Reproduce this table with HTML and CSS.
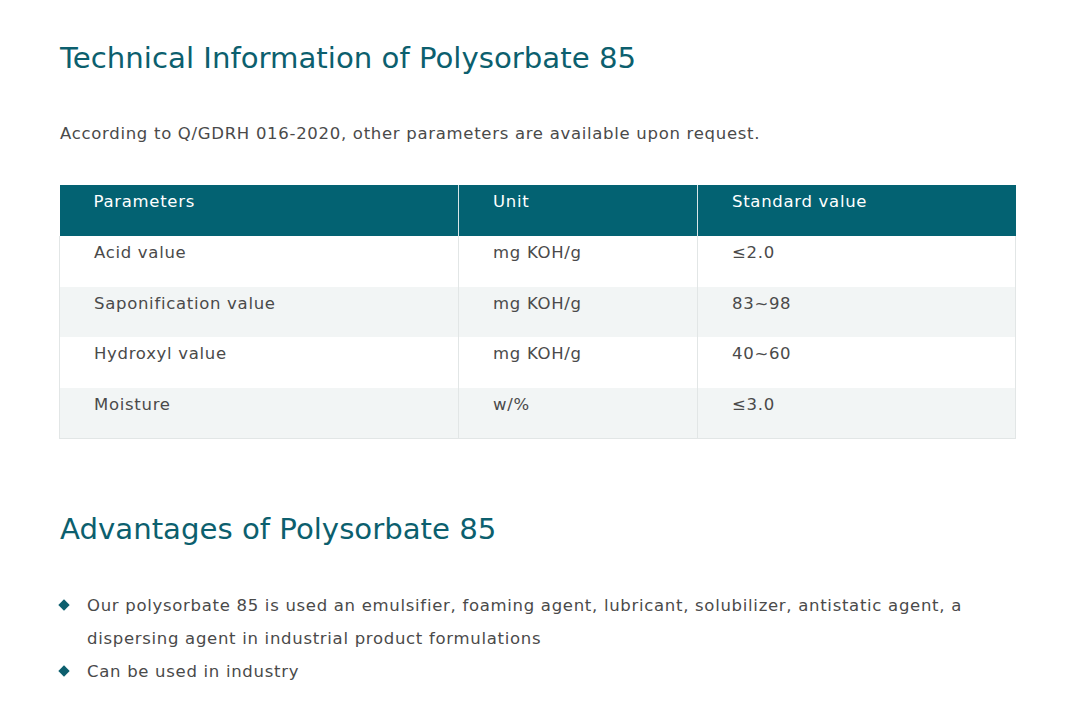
FILE: index.html
```html
<!DOCTYPE html>
<html lang="en">
<head>
<meta charset="utf-8">
<link rel="stylesheet" href="styles.css">
</head>
<body>
<main class="page">
  <h2 class="title">Technical Information of Polysorbate 85</h2>
  <p class="intro">According to Q/GDRH 016-2020, other parameters are available upon request.</p>
  <table class="spec">
    <colgroup><col class="c1"><col class="c2"><col class="c3"></colgroup>
    <thead>
      <tr><th>Parameters</th><th>Unit</th><th>Standard value</th></tr>
    </thead>
    <tbody>
      <tr><td>Acid value</td><td>mg KOH/g</td><td>≤2.0</td></tr>
      <tr><td>Saponification value</td><td>mg KOH/g</td><td>83~98</td></tr>
      <tr><td>Hydroxyl value</td><td>mg KOH/g</td><td>40~60</td></tr>
      <tr><td>Moisture</td><td>w/%</td><td>≤3.0</td></tr>
    </tbody>
  </table>
  <h2 class="title title-adv">Advantages of Polysorbate 85</h2>
  <ul class="adv">
    <li>Our polysorbate 85 is used an emulsifier, foaming agent, lubricant, solubilizer, antistatic agent, a dispersing agent in industrial product formulations</li>
    <li>Can be used in industry</li>
  </ul>
</main>
</body>
</html>
```
FILE: styles.css
```css
html, body {
  margin: 0;
  padding: 0;
  background: #ffffff;
}
body {
  font-family: "DejaVu Sans", "Noto Sans", sans-serif;
  color: #4a4a4a;
}
.page {
  width: 956px;
  padding: 38px 0 0 59px;
}
.title {
  margin: 0 0 0 1px;
  font-weight: 400;
  font-size: 29.2px;
  line-height: 40px;
  color: #0c5f6e;
}
.intro {
  margin: 43px 0 0 1px;
  font-size: 16.5px;
  letter-spacing: 0.7px;
  line-height: 26px;
  color: #4a4a4a;
}
.spec {
  margin-top: 38px;
  width: 956px;
  border-collapse: collapse;
  table-layout: fixed;
  font-size: 16.5px;
  letter-spacing: 0.7px;
}
.c1 { width: 399px; }
.c2 { width: 239px; }
.c3 { width: 318px; }
.spec th, .spec td {
  height: 50.5px;
  box-sizing: border-box;
  padding: 5px 0 0 34px;
  text-align: left;
  vertical-align: top;
  line-height: 24px;
}
.spec th {
  height: 51px;
  background: #036272;
  color: #ffffff;
  font-weight: 400;
  border-left: 1px solid #d8e6e8;
}
.spec th:first-child { border-left: 0; }
.spec td {
  border: 1px solid #e2e6e6;
  border-top: 0;
  border-bottom: 0;
  padding-top: 5px;
}
.spec tbody tr:nth-child(even) td { background: #f2f5f5; }
.spec tbody tr:last-child td { border-bottom: 1px solid #e2e6e6; }
.title-adv {
  margin-top: 70px;
}
.adv {
  list-style: none;
  margin: 40px 0 0 0;
  padding: 0;
  font-size: 16.5px;
  letter-spacing: 0.7px;
  line-height: 33px;
}
.adv li {
  position: relative;
  padding-left: 28px;
}
.adv li::before {
  content: "";
  position: absolute;
  top: 12.5px;
  left: 1px;
  width: 8px;
  height: 8px;
  background: #0c5f6e;
  transform: rotate(45deg);
}
```
